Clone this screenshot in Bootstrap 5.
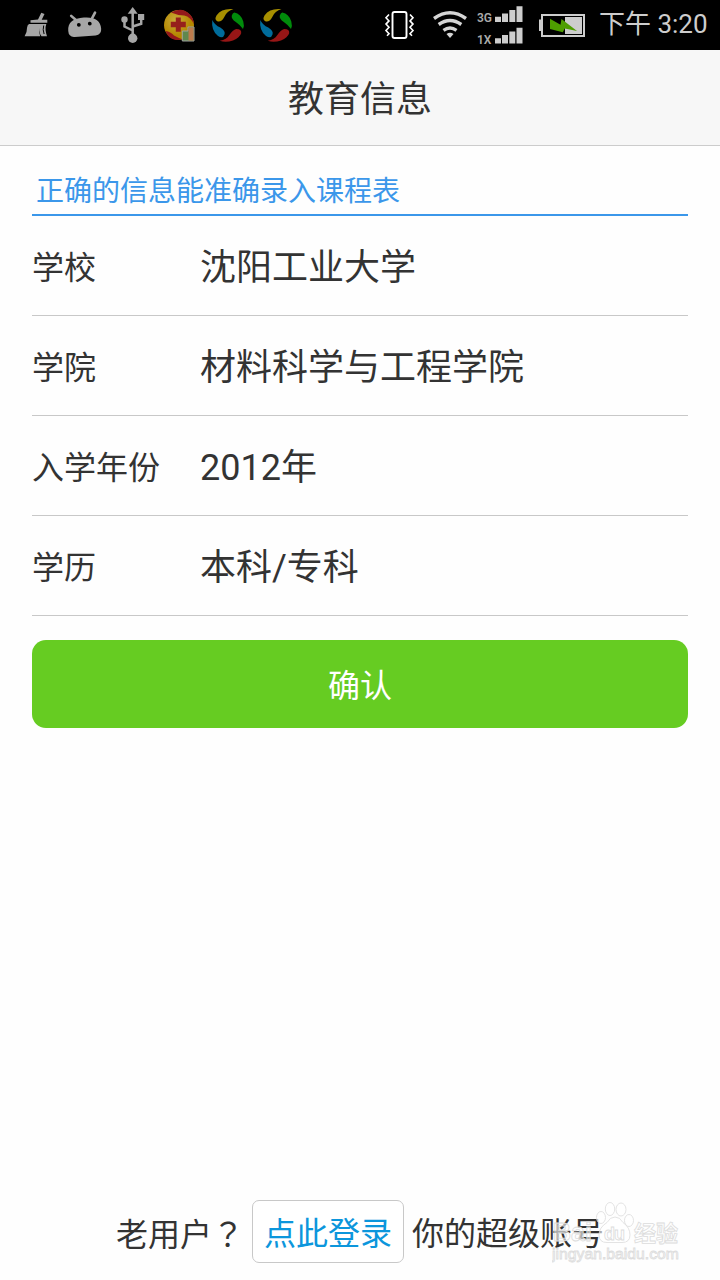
<!DOCTYPE html>
<html lang="zh-CN">
<head>
<meta charset="utf-8">
<meta name="viewport" content="width=device-width, initial-scale=1">
<title>教育信息</title>
<link href="https://cdn.jsdelivr.net/npm/bootstrap@5.3.0/dist/css/bootstrap.min.css" rel="stylesheet">
<style>
  body { font-family: Roboto, "Noto Sans CJK SC", sans-serif; color: #333; background: #fefefe; line-height: 1; }
  .status-bar { height: 50px; background: #000; color: #cdcdcd; padding: 0 11px 0 12px; }
  .status-bar svg { display: block; flex: none; }
  .clock { font-size: 26px; line-height: 49px; width: 110px; white-space: nowrap; }
  .title-bar { height: 96px; background: #f7f7f7; border-bottom: 1px solid #ccc; }
  .title-bar h1 { font-size: 36px; font-weight: 400; line-height: 100px; }
  .page-body { padding: 0 32px; }
  .hint { height: 70px; padding: 26px 4px 0; font-size: 28px; line-height: 40px; color: #3b97ea; border-bottom: 2px solid #3b97ea; }
  .field-row { height: 100px; border-bottom: 1px solid #c8c8c8; line-height: 105px; }
  .field-row dt { width: 168px; font-size: 32px; font-weight: 400; }
  .field-row dd { font-size: 36px; }
  .btn-confirm, .btn-confirm:hover { height: 88px; margin-top: 24px; padding: 10px 0 6px; border: 0; border-radius: 14px; background: #66cc22; color: #fff; font-size: 32px; }
  .login-row { height: 63px; margin-bottom: 17px; font-size: 32px; gap: 8px; padding-left: 116px; white-space: nowrap; }
  .login-row span { padding-top: 4px; }
  .qmark { font-family: "Noto Sans CJK TC", sans-serif; font-size: 32px; }
  .btn-login { width: 152px; height: 63px; padding: 4px 0 0; border: 1px solid #c8c8c8; border-radius: 7px; color: #0c96dc; font-size: 32px; background: #fff; }
  .watermark { right: 36px; bottom: 12px; pointer-events: none; }
</style>
</head>
<body>
<div class="d-flex flex-column vh-100 position-relative overflow-hidden">

  <header class="status-bar d-flex justify-content-between">
    <div class="d-flex">
      <svg width="48" height="50" viewBox="12 0 48 50" fill="#a6a6a6">
        <path d="M41.300 12.700l3.200 1.200-2.800 5.900h5.600v3H30.500v-2.600l7.500-.6z"/>
        <path d="M29 24h17.300q-1.800 5 .7 12.300h-5.500q-2.500-2.700-1.900-8.200-1.200 4.300.6 8.200H24.600Q27.200 32 27 28q.2-3 2-4z"/>
        <path d="M43.700 25.500q-1.200 4.200.4 8.500" stroke="#000" fill="none"/>
      </svg>
      <svg width="48" height="50" viewBox="60 0 48 50">
        <g transform="rotate(-4 84 27)">
          <path d="M68 30C68 21 74 17.500 84.500 17.500S101 21 101 30q0 6.200-6 6.200H74q-6 0-6-6.200z" fill="#a6a6a6"/>
          <path d="M77 20l-5-5M92 20l4-6.500" stroke="#a6a6a6" stroke-width="2.600" stroke-linecap="round"/>
          <circle cx="79" cy="24.500" r="1.900"/><circle cx="90" cy="24" r="1.900"/>
        </g>
      </svg>
      <svg width="48" height="50" viewBox="108 0 48 50" fill="#a6a6a6">
        <path d="M132.700 38V12M132.700 30.500l-8.200-4V20M132.700 26.500l8.500-2.700V17" stroke="#a6a6a6" stroke-width="2.500" fill="none"/>
        <path d="M132.700 7l5 6.800h-10z"/><circle cx="124.500" cy="19.500" r="3.200"/><path d="M138 14h6.200v6H138z"/><circle cx="132.700" cy="38.300" r="4.700"/>
      </svg>
      <svg width="48" height="50" viewBox="156 0 48 50">
        <defs><radialGradient id="coin" cx=".4" cy=".35"><stop stop-color="#c8ad3c"/><stop offset="1" stop-color="#b58700"/></radialGradient></defs>
        <circle cx="179" cy="25" r="15" fill="url(#coin)"/>
        <path d="M171 12.500Q182 6 190 14.500q3.800 4 3.800 9.500-3-7-9.500-8.500-8-.5-13.300-3zM165.500 31q5 .5 8.500 4.500 4 2.300 9 4-11 2-15.500-4.500z" fill="#94191b"/>
        <path d="M175.800 17.500h5v4.300h5v5.500h-5v4.400h-5v-4.400h-5v-5.500h5z" fill="#96201c"/>
        <path d="M182.300 31h5.700v-4h6v14h-11.700z" fill="#5f884e" stroke="#a0a3a0"/>
        <path d="M188.500 27.500h5v13h-5z" fill="#bd7b4d"/>
      </svg>
      <svg width="48" height="50" viewBox="204 0 48 50">
        <g id="swirl">
          <path d="M233.500 9.300Q222 8 216.500 15.500q-2.500 4.500 1.300 6 4 .5 6.200-4Q227 10.500 233.500 9.300z" fill="#a78f00"/>
          <path d="M234.300 12.400q6.700 1.300 9 9 1.300 4.500-.3 7.600-3-4.200-7.200-7-4.800-3.200-4-6.600.8-2.600 2.500-3z" fill="#008b0b"/>
          <path d="M212.300 20q2.300 5.200 8 7.600 5.500 3.700 4.200 7-1.500 4.700-6.500 1.400-7-5.500-5.700-16z" fill="#006c9b"/>
          <path d="M219.800 40.800q7-1.300 9.200-5.300 3.800-5.800 7.200-6.500 5.500 0 5 4.200-1.400 4.400-8.200 7.200-7 2.300-13.200.4z" fill="#971616"/>
        </g>
      </svg>
      <svg width="48" height="50" viewBox="204 0 48 50"><use href="#swirl"/></svg>
    </div>

    <div class="d-flex">
      <svg width="50" height="50" viewBox="376 0 50 50" fill="none" stroke="#fff">
        <rect x="392.500" y="12" width="14" height="26" rx="2" stroke-width="1.900"/>
        <path d="M389 14.500l-3 3.200 3 3.200-3 3.200 3 3.200-3 3.200 3 3.200-2 2M410 14.500l3 3.200-3 3.200 3 3.200-3 3.200 3 3.200-3 3.200 2 2" stroke-width="1.600"/>
      </svg>
      <svg width="50" height="50" viewBox="426 0 50 50" fill="none" stroke="#d5d5d5" stroke-width="3.400">
        <path d="M434 18.500q16-11.500 32 0M438.700 24.500q11.300-8.200 22.600 0M443.500 30.300q6.500-4.600 13 0"/>
        <path d="M450 38l-3.500-4q3.500-2.700 7 0z" fill="#d5d5d5" stroke="none"/>
      </svg>
      <svg width="62" height="50" viewBox="476 0 62 50" fill="#cdcdcd">
        <g font-family="Roboto, sans-serif" font-size="12" font-weight="600" fill="#aaa"><text x="477" y="21.500">3G</text><text x="477" y="43.500">1X</text></g>
        <path id="bars" d="M495 16.700h6V22h-6zM502 13.500h6V22h-6zM509.300 10h6v12h-6zM516.500 6.300h6V22h-6z"/>
        <use href="#bars" y="21.500"/>
      </svg>
      <svg width="61" height="50" viewBox="538 0 61 50">
        <path d="M539 19.500h3V31h-3z" fill="#cdcdcd"/>
        <rect x="542" y="15" width="42" height="21" fill="#000" stroke="#cdcdcd" stroke-width="2"/>
        <path d="M565 17h17v17h-17z" fill="#cdcdcd"/>
        <path d="M550 18.700l10.500 6 1-5.700 15.500 12-12.200-2.500-2 3.800L550 29z" fill="#4e9e00"/>
      </svg>
      <div class="clock">下午 3:20</div>
    </div>
  </header>

  <div class="title-bar text-center"><h1 class="m-0">教育信息</h1></div>

  <main class="page-body flex-grow-1">
    <div class="hint">正确的信息能准确录入课程表</div>
    <dl class="m-0">
      <div class="field-row d-flex"><dt>学校</dt><dd class="m-0">沈阳工业大学</dd></div>
      <div class="field-row d-flex"><dt>学院</dt><dd class="m-0">材料科学与工程学院</dd></div>
      <div class="field-row d-flex"><dt>入学年份</dt><dd class="m-0">2012年</dd></div>
      <div class="field-row d-flex"><dt>学历</dt><dd class="m-0">本科/专科</dd></div>
    </dl>
    <button type="button" class="btn btn-confirm w-100">确认</button>
  </main>

  <footer class="login-row d-flex align-items-center">
    <span>老用户<b class="qmark fw-normal" lang="zh-TW">？</b></span>
    <a href="#" class="btn btn-login d-flex align-items-center justify-content-center">点此登录</a>
    <span>你的超级账号</span>
  </footer>

  <svg class="watermark position-absolute" width="132" height="66" viewBox="552 1202 132 66" fill="#fff" fill-opacity=".6" stroke="#dcdcdc" stroke-width=".8">
    <text x="553" y="1241" font-family="Liberation Sans, sans-serif" font-size="25" font-weight="700">Bai</text>
    <ellipse cx="601" cy="1217.500" rx="4.500" ry="6"/><ellipse cx="610" cy="1209" rx="4.700" ry="6.500"/><ellipse cx="621" cy="1209.500" rx="5" ry="6.500"/><ellipse cx="629" cy="1220.500" rx="4.500" ry="6"/>
    <path d="M615 1217q5 0 8 5.500 7 5 7 12.500t-8 7.500h-15q-8 0-8-7.500t8-12.500q3-5.500 8-5.500z"/>
    <text x="604" y="1240" font-family="Liberation Sans, sans-serif" font-size="18" font-weight="700" textLength="21">du</text>
    <text x="634" y="1241" font-family="Noto Sans CJK SC, sans-serif" font-size="22" font-weight="700">经验</text>
    <text x="552" y="1259" font-family="Liberation Sans, sans-serif" font-size="15" textLength="127" lengthAdjust="spacingAndGlyphs">jingyan.baidu.com</text>
  </svg>
</div>
<script src="https://cdn.jsdelivr.net/npm/bootstrap@5.3.0/dist/js/bootstrap.bundle.min.js"></script>
</body>
</html>
